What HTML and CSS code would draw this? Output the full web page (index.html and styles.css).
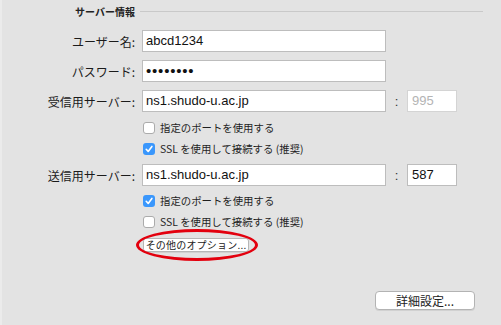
FILE: index.html
```html
<!DOCTYPE html>
<html lang="ja">
<head>
  <meta charset="UTF-8" />
  <title>サーバー情報</title>
  <link rel="stylesheet" href="styles.css">
</head>
<body>
  <div class="panel">
    <div class="section-head">
      <span class="section-title">サーバー情報</span>
      <span class="section-line"></span>
    </div>

    <div class="field-row">
      <label class="field-label">ユーザー名:</label>
      <div class="text-box">abcd1234</div>
    </div>
    <div class="field-row">
      <label class="field-label">パスワード:</label>
      <div class="text-box dots">••••••••</div>
    </div>
    <div class="field-row">
      <label class="field-label">受信用サーバー:</label>
      <div class="text-box">ns1.shudo-u.ac.jp</div>
      <span class="colon">:</span>
      <div class="text-box port disabled">995</div>
    </div>
    <div class="check-row first">
      <span class="box"></span>
      <span class="check-text">指定のポートを使用する</span>
    </div>
    <div class="check-row">
      <span class="box checked">
        <svg viewBox="0 0 12 12" width="12" height="12"><path d="M3.2 6.3 L5.2 8.4 L8.9 3.4" fill="none" stroke="#fff" stroke-width="1.6" stroke-linecap="round" stroke-linejoin="round"/></svg>
      </span>
      <span class="check-text">SSL を使用して接続する (推奨)</span>
    </div>

    <div class="field-row second">
      <label class="field-label">送信用サーバー:</label>
      <div class="text-box">ns1.shudo-u.ac.jp</div>
      <span class="colon">:</span>
      <div class="text-box port">587</div>
    </div>
    <div class="check-row first-out">
      <span class="box checked">
        <svg viewBox="0 0 12 12" width="12" height="12"><path d="M3.2 6.3 L5.2 8.4 L8.9 3.4" fill="none" stroke="#fff" stroke-width="1.6" stroke-linecap="round" stroke-linejoin="round"/></svg>
      </span>
      <span class="check-text">指定のポートを使用する</span>
    </div>
    <div class="check-row">
      <span class="box"></span>
      <span class="check-text">SSL を使用して接続する (推奨)</span>
    </div>

    <div class="options-wrap">
      <button class="small-btn">その他のオプション...</button>
      <span class="highlight"></span>
    </div>

    <div class="footer">
      <button class="push-btn">詳細設定...</button>
    </div>
  </div>
</body>
</html>
```

FILE: styles.css
```css
body {
  margin: 0;
  background-color: #e3e3e3;
  font-family: "Noto Sans CJK JP", "Liberation Sans", sans-serif;
  color: #1b1b1b;
  overflow: hidden;
}

.panel {
  width: 499px;
  height: 325px;
  border-left: 2px solid #ebebeb;
}

.section-head {
  display: flex;
  align-items: center;
  height: 22px;
  padding-left: 73px;
}

.section-title {
  font-size: 10px;
  font-weight: bold;
  color: #222;
}

.section-line {
  flex: 1;
  height: 1px;
  background-color: #c9c9c9;
  margin-left: 5px;
  margin-right: 18px;
}

.field-row {
  display: grid;
  grid-template-columns: 140px 244px 21px 50px;
  align-items: center;
  height: 22px;
  margin-top: 8px;
}

.field-row.second {
  margin-top: 5px;
}

.field-label {
  font-size: 12px;
  text-align: right;
  padding-right: 7px;
}

.text-box {
  box-sizing: border-box;
  height: 22px;
  line-height: 20px;
  border: 1px solid #bdbdbd;
  background-color: #fff;
  padding-left: 3px;
  font-family: "Liberation Sans", Arial, sans-serif;
  font-size: 13px;
  color: #111;
}

.text-box.dots {
  font-size: 15px;
  letter-spacing: 0.8px;
  line-height: 19px;
}

.text-box.port {
  padding-left: 4px;
}

.text-box.disabled {
  border-color: #d4d4d4;
  color: #b4b4b4;
}

.colon {
  text-align: center;
  font-family: "Liberation Sans", Arial, sans-serif;
  font-size: 13px;
  color: #333;
}

.check-row {
  display: flex;
  align-items: center;
  height: 21px;
  padding-left: 141px;
}

.check-row.first {
  margin-top: 5px;
}

.check-row.first-out {
  margin-top: 4px;
}

.box {
  box-sizing: border-box;
  width: 12px;
  height: 12px;
  border: 1px solid #ababab;
  border-radius: 3px;
  background-color: #fff;
  margin-right: 5px;
  display: flex;
}

.box.checked {
  border: none;
  background-color: #3a97fc;
}

.check-text {
  font-size: 10.4px;
  color: #1f1f1f;
}

.options-wrap {
  position: relative;
  margin-top: 6px;
  margin-left: 141px;
  width: 106px;
  height: 14px;
}

.small-btn {
  display: block;
  box-sizing: border-box;
  width: 106px;
  height: 14px;
  padding: 0;
  border: 1px solid #b7b7b7;
  border-radius: 3px;
  background-color: #fff;
  box-shadow: 0 1px 0 rgba(0, 0, 0, 0.08);
  font-family: "Noto Sans CJK JP", sans-serif;
  font-size: 10px;
  letter-spacing: 0.2px;
  line-height: 12px;
  white-space: nowrap;
  color: #222;
}

.highlight {
  position: absolute;
  left: -7px;
  top: -9px;
  width: 122px;
  height: 32px;
  box-sizing: border-box;
  border: 3px solid #e3000e;
  border-radius: 50%;
}

.footer {
  margin-top: 39px;
  padding-left: 373px;
}

.push-btn {
  display: block;
  box-sizing: border-box;
  width: 100px;
  height: 19px;
  padding: 0;
  border: 1px solid #b3b3b3;
  border-radius: 4px;
  background-color: #fff;
  box-shadow: 0 1px 0 rgba(0, 0, 0, 0.08);
  font-family: "Noto Sans CJK JP", sans-serif;
  font-size: 12px;
  line-height: 16px;
  color: #222;
}
```
